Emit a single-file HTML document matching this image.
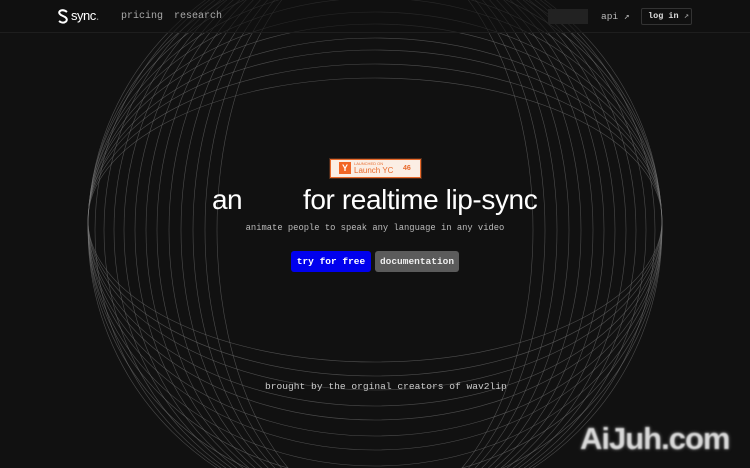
<!DOCTYPE html>
<html><head><meta charset="utf-8"><style>
*{margin:0;padding:0;box-sizing:border-box}
html,body{width:750px;height:468px;overflow:hidden}
body{background:#111;position:relative;font-family:"Liberation Sans",sans-serif;color:#fff}
.mono{font-family:"Liberation Mono",monospace}
svg.bg{position:absolute;left:0;top:0;display:block}
.hdr{position:absolute;left:0;top:0;width:750px;height:33px;border-bottom:1px solid #1e1e1e;background:rgba(17,17,17,0.6)}
.abs{position:absolute;white-space:nowrap}
</style></head><body>
<svg class="bg" width="750" height="468" viewBox="0 0 750 468" fill="none" stroke="#777" stroke-width="0.6" stroke-opacity="0.6">
<g>
<ellipse cx="375" cy="230" rx="158" ry="285"/>
<ellipse cx="375" cy="230" rx="170" ry="285"/>
<ellipse cx="375" cy="230" rx="182" ry="285"/>
<ellipse cx="375" cy="230" rx="194" ry="285"/>
<ellipse cx="375" cy="230" rx="206" ry="285"/>
<ellipse cx="375" cy="230" rx="218" ry="285"/>
<ellipse cx="375" cy="230" rx="229" ry="285"/>
<ellipse cx="375" cy="230" rx="240" ry="285"/>
<ellipse cx="375" cy="230" rx="251" ry="285"/>
<ellipse cx="375" cy="230" rx="261" ry="285"/>
<ellipse cx="375" cy="230" rx="271" ry="285"/>
<ellipse cx="375" cy="230" rx="280" ry="285"/>
<ellipse cx="375" cy="230" rx="287" ry="285"/>
<ellipse cx="375" cy="220" rx="287" ry="142"/>
<ellipse cx="375" cy="220" rx="287" ry="156"/>
<ellipse cx="375" cy="220" rx="287" ry="170"/>
<ellipse cx="375" cy="222" rx="287" ry="184"/>
<ellipse cx="375" cy="222" rx="287" ry="198"/>
<ellipse cx="375" cy="224" rx="287" ry="212"/>
<ellipse cx="375" cy="224" rx="287" ry="226"/>
<ellipse cx="375" cy="226" rx="287" ry="240"/>
<ellipse cx="375" cy="226" rx="287" ry="254"/>
<ellipse cx="375" cy="228" rx="287" ry="268"/>
</g>
</svg>
<div class="hdr"></div>
<svg class="abs" style="left:57px;top:9px" width="12" height="15" viewBox="0 0 12 15" fill="none" stroke="#fff" stroke-width="2"><path d="M10 3 Q6 0 3 2 Q1 4 4 6 L8 8 Q11 10 9 12.5 Q6 15 2 12"/></svg>
<div class="abs" style="left:71px;top:8px;font-size:13px;letter-spacing:-0.5px">sync<span style="color:#888">.</span></div>
<div class="abs mono" style="left:121px;top:11px;font-size:10px;color:#aaa">pricing</div>
<div class="abs mono" style="left:174px;top:11px;font-size:10px;color:#aaa">research</div>
<div class="abs" style="left:548px;top:9px;width:40px;height:15px;background:#222"></div>
<div class="abs mono" style="left:601px;top:11px;font-size:9.5px;color:#bbb">api ↗</div>
<div class="abs mono" style="left:641px;top:8px;width:51px;height:17px;border:1px solid #333;border-radius:2px;font-size:8.5px;font-weight:bold;line-height:15px;padding-left:6px;color:#ddd">log in <span style="font-weight:normal;color:#aaa">↗</span></div>
<div class="abs" style="left:330px;top:159px;width:91px;height:19px;background:#fbeee4;border:1px solid #e8692a;box-shadow:0 0 0 1px #4a2a1a"></div>
<div class="abs" style="left:339px;top:162px;width:12px;height:12px;background:#f26625;color:#fff;font-size:9px;font-weight:bold;text-align:center;line-height:12px">Y</div>
<div class="abs" style="left:354px;top:161px;font-size:4px;color:#e8692a">LAUNCHED ON</div>
<div class="abs" style="left:354px;top:166px;font-size:8px;color:#e8692a">Launch YC</div>
<div class="abs" style="left:403px;top:165px;font-size:7px;color:#e8692a;font-weight:bold">46</div>
<div class="abs" style="left:212px;top:184px;font-size:28px;letter-spacing:-0.6px">an</div>
<div class="abs" style="left:303px;top:184px;font-size:28px;letter-spacing:-0.4px">for realtime lip-sync</div>
<div class="abs mono" style="left:0;width:750px;top:223px;text-align:center;font-size:8.8px;color:#bbb">animate people to speak any language in any video</div>
<div class="abs mono" style="left:291px;top:251px;width:80px;height:21px;background:#0000ee;border-radius:3px;font-size:9.5px;font-weight:bold;text-align:center;line-height:21px">try for free</div>
<div class="abs mono" style="left:375px;top:251px;width:84px;height:21px;background:#5b5b5b;border-radius:3px;font-size:9.5px;font-weight:bold;text-align:center;line-height:21px;color:#eee">documentation</div>
<div class="abs mono" style="left:265px;top:381px;font-size:9.6px;color:#ccc">brought by the orginal creators of wav2lip</div>
<div class="abs" style="left:580px;top:419px;height:45px;font-size:31px;line-height:40px;font-weight:bold;color:#d8d8d8;letter-spacing:-1px;filter:blur(0.8px);text-shadow:0 0 3px #888">AiJuh.com</div>
</body></html>
